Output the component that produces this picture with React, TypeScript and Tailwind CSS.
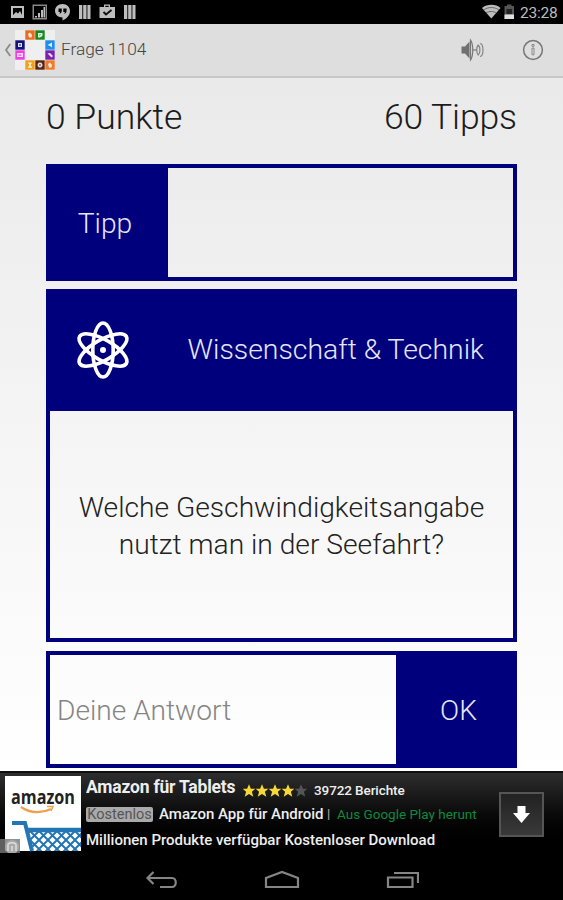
import type { ReactNode } from 'react';

const tiles = [
    { x: 10, y: 0, color: '#ec6a1b', glyph: 'flame' },
    { x: 20, y: 0, color: '#128a1c', glyph: 'leaf' },
    { x: 0, y: 10, color: '#14127a', glyph: 'atom' },
    { x: 30, y: 10, color: '#1f8df0', glyph: 'arrow' },
    { x: 0, y: 20, color: '#f03ce8', glyph: 'screen' },
    { x: 30, y: 20, color: '#7a1fae', glyph: 'tag' },
    { x: 10, y: 30, color: '#f0a21e', glyph: 'figure' },
    { x: 20, y: 30, color: '#5a2410', glyph: 'ball' },
    { x: 30, y: 30, color: '#f07a2a', glyph: 'flame' },
];

const glyphs: Record<string, ReactNode> = {
    flame: <path d="M3 4 L5 2.5 L7 5 L6.5 7.5 H4 Z" />,
    leaf: <path d="M3 3 H7.5 V6 L5 7.5 H3 Z M4.5 4.5 V6 L6 4.5 Z" fillRule="evenodd" />,
    atom: <path d="M3 3 H7 V7 H3 Z M4.3 4.3 V5.7 H5.7 V4.3 Z" fillRule="evenodd" />,
    arrow: <path d="M7 2.5 V7.5 L5 6 L2.5 5 Z" />,
    screen: <path d="M2 3 H8 V7 H2 Z M3.5 4.4 V5.8 H6.5 V4.4 Z" fillRule="evenodd" />,
    tag: <path d="M2.5 3.5 L5 3 L8 6 L6.5 7.5 Z" />,
    figure: <path d="M3 2.5 H7 L5.8 4.5 V6.5 H7 V7.8 H3 V6.5 H4.2 V4.5 Z" />,
    ball: <path d="M5 2.5 A2.5 2.5 0 1 0 5.01 2.5 Z M4.5 4 V6 H5.5 V4 Z" fillRule="evenodd" />,
};

export default function App() {
    return <div className="w-[563px] h-[900px] overflow-hidden flex flex-col bg-black font-['Roboto','Liberation_Sans',sans-serif]">
        <StatusBar />
        <ActionBar />
        <main className="h-[693px] shrink-0 px-[46px] bg-linear-to-b from-[#eaeaea] to-white flex flex-col">
            <div className="h-[86px] pt-[15px] flex justify-between font-light text-[35.5px] leading-[48px] text-[#1c1c1c]">
                <span>0 Punkte</span>
                <span className="-tracking-[0.1px]">60 Tipps</span>
            </div>
            <section className="h-[117px] shrink-0 flex border-4 border-[#00007c]">
                <button className="w-[118px] pr-2 pt-1 bg-[#00007c] text-[#e6e6fa] text-[28.2px] font-light">Tipp</button>
            </section>
            <section className="mt-2 h-[353px] shrink-0 flex flex-col border-4 border-[#00007c]">
                <div className="h-[118px] pb-1 shrink-0 bg-[#00007c] flex items-center justify-between pl-[25px] pr-[29px]">
                    <AtomIcon />
                    <h1 className="text-[28.4px] font-light text-[#e6e6fa] whitespace-nowrap">Wissenschaft &amp; Technik</h1>
                </div>
                <p className="grow pt-[3px] flex flex-col items-center justify-center text-[28.2px] leading-[37px] font-light text-[#222] whitespace-nowrap">
                    <span>Welche Geschwindigkeitsangabe</span>
                    <span>nutzt man in der Seefahrt?</span>
                </p>
            </section>
            <section className="mt-[9px] h-[117px] shrink-0 flex border-4 border-[#00007c]">
                <div className="grow pl-[7px] pt-[3px] flex items-center text-[28.1px] font-light text-[#858585]">Deine Antwort</div>
                <button className="w-[117px] pl-2 pt-[3px] bg-[#00007c] text-[#e6e6fa] text-[28.2px] font-light">OK</button>
            </section>
        </main>
        <AdBanner />
        <NavBar />
    </div>
}

function StatusBar() {
    return <header className="h-[24px] shrink-0 bg-black flex items-center justify-between pl-[11px] pr-[5px]">
        <svg width="126" height="24" viewBox="11 0 126 24" fill="#bdbdbd">
            <path d="M11 6H24V18H11Z M13 8V16H22V8Z" fillRule="evenodd" />
            <path d="M13 15L16 12L18 13.5L20 11L22 15V16H13Z" />
            <path d="M32.5 4.5H47V19.5H32.5Z M34 6V18H45.5V6Z" fillRule="evenodd" fill="#888" />
            <path d="M35 16H37V17.5H35Z M38 13H40V17.5H38Z M41 10H43V17.5H41Z M43.5 7H45V17.5H43.5Z" />
            <path d="M62.5 4C67 4 70 7.3 70 11C70 15.5 66.5 18.8 62.5 20.5V17.5C58.5 17.5 55 15 55 10.8C55 7 58 4 62.5 4Z M58.5 8.5V12H60L59.5 14C61.2 13.2 61.8 12 61.8 10.5V8.5Z M63.3 8.5V12H64.8L64.3 14C66 13.2 66.6 12 66.6 10.5V8.5Z" fillRule="evenodd" />
            <path d="M79 5H82.3V19H79Z M83.2 5H86.5V19H83.2Z M87.4 5H90.5V19H87.4Z" />
            <path d="M104 7V4.5H110V7H115V18H99.5V7Z M105.3 5.7V7H108.7V5.7Z" fillRule="evenodd" />
            <path d="M103.5 12L106 14.5L111.5 10" fill="none" stroke="#111" strokeWidth="2" />
            <path d="M124 5H127.3V19H124Z M128.2 5H131.5V19H128.2Z M132.4 5H135.5V19H132.4Z" />
        </svg>
        <div className="flex items-center">
            <svg width="38" height="24" viewBox="482 0 38 24" fill="#bdbdbd">
                <path d="M482 8C487 3.8 496 3.8 500.5 8L491.3 18.5Z" />
                <path d="M483.5 10C488 6.7 494.5 6.7 499 10M486 13C489 11 493.5 11 496.5 13" fill="none" stroke="#444" strokeWidth="0.7" />
                <path d="M507 4.5H511.5V6H514V19H504.5V6H507Z" fill="#555" />
                <path d="M506.5 9H512V14H506.5Z" fill="#222" />
                <path d="M504.5 14.5H514V19H504.5Z" fill="#e0e0e0" />
            </svg>
            <span className="text-[15.5px] leading-6 pt-0.5 text-[#bdbdbd] w-[38px] -tracking-[0.2px]">23:28</span>
        </div>
    </header>
}

function ActionBar() {
    return <div className="h-[54px] shrink-0 bg-[#dedede] border-b-2 border-[#c8c8c8] flex items-center pl-1 pr-[19px]">
        <svg width="11" height="20" viewBox="0 0 11 20" fill="none" stroke="#8b8b8b" strokeWidth="1.8">
            <path d="M6.3 4L2 10L6.3 16" />
        </svg>
        <svg width="40" height="40" viewBox="0 0 40 40">
            <rect width="40" height="40" fill="#efefef" />
            {tiles.map((tile, index) => <g key={index} transform={`translate(${tile.x} ${tile.y})`}>
                <rect x="0.3" y="0.3" width="9.4" height="9.4" fill={tile.color} />
                <g fill="#fff" opacity="0.85">{glyphs[tile.glyph]}</g>
            </g>)}
        </svg>
        <span className="ml-[6px] text-[17.3px] text-[#444] font-light grow">Frage 1104</span>
        <svg className="mr-[37px]" width="25" height="24" viewBox="0 0 25 24">
            <path d="M1.5 8.5H5L9.5 3.5V20.5L5 15.5H1.5Z" fill="#707070" />
            <path d="M10.5 2V22C13.5 18 13.5 6 10.5 2Z" fill="#dedede" stroke="#777" strokeWidth="1.2" />
            <path d="M13 12H17" stroke="#777" strokeWidth="1.2" />
            <path d="M18.2 7C16.3 9 16.3 15 18.2 17C20.5 15 20.5 9 18.2 7ZM20 5.5C24 6 24 18 20 18.5" fill="none" stroke="#858585" strokeWidth="1.2" />
        </svg>
        <svg width="22" height="22" viewBox="0 0 22 22" fill="none" stroke="#777">
            <circle cx="11" cy="11" r="9.4" strokeWidth="1.5" />
            <path d="M10 5.5H12V7.3H10Z M10 9H12V15.8H10Z" strokeWidth="0.8" />
        </svg>
    </div>
}

function AtomIcon() {
    return <svg width="56" height="60" viewBox="-28 -30 56 60" fill="none" stroke="#fff" strokeWidth="3.6">
        <ellipse rx="10.2" ry="27" />
        <ellipse rx="10.2" ry="27" transform="rotate(60)" />
        <ellipse rx="10.2" ry="27" transform="rotate(-60)" />
        <circle r="3" fill="#fff" stroke="none" />
    </svg>
}

function AdBanner() {
    return <aside className="h-[82px] shrink-0 bg-linear-to-b from-[#2e2e2e] to-black border-t-2 border-[#101010] flex">
        <CartLogo />
        <div className="ml-[5px] w-[391px] shrink-0 overflow-hidden whitespace-nowrap text-[#eee] font-medium">
            <div className="h-[28px] flex items-center">
                <strong className="w-[156px] shrink-0 text-[17.5px] leading-7 font-bold -tracking-[0.2px]">Amazon für Tablets</strong>
                <Stars />
                <span className="ml-[7px] pt-[7px] text-[13.5px] -tracking-[0.1px]">39722 Berichte</span>
            </div>
            <div className="h-[26px] flex items-center">
                <span className="w-[67px] h-[15px] shrink-0 rounded-[2px] bg-[#aaa] text-[#555] text-[14.5px] leading-[15px] text-center font-normal">Kostenlos</span>
                <span className="ml-[6px] w-[168px] shrink-0 text-[15px]">Amazon App für Android</span>
                <span className="w-[10px] shrink-0 text-[13px] text-[#aaa]">|</span>
                <span className="text-[13.5px] font-normal text-[#0c8a3e]">Aus Google Play herunt</span>
            </div>
            <div className="h-[26px] text-[15px] leading-[26px]">Millionen Produkte verfügbar Kostenloser Download</div>
        </div>
        <div className="mt-[19px] ml-[22px] w-[45px] h-[45px] shrink-0 flex items-center justify-center border-2 border-[#555] bg-linear-to-b from-[#222] to-[#393939]">
            <svg width="17" height="17" viewBox="0 0 17 17">
                <path d="M4.5 0H12.5V7H17L8.5 17L0 7H4.5Z" fill="#fff" />
            </svg>
        </div>
    </aside>
}

function Stars() {
    return <svg className="mt-[7px] ml-px shrink-0" width="64" height="14" viewBox="0 0 64 14">
        {[0, 1, 2, 3, 4].map(i => <path
            key={i}
            transform={`translate(${i * 13} 0)`}
            d="M6 0.3L7.9 4.7H12.3L8.9 7.8L10.3 12.8L6 10L1.7 12.8L3.1 7.8L-0.3 4.7H4.1Z"
            fill={i < 4 ? '#f8d838' : '#555'}
        />)}
    </svg>
}

function CartLogo() {
    return <svg className="mt-[3px] shrink-0" width="81" height="79" viewBox="0 0 81 79">
        <defs>
            <pattern id="mesh" width="9" height="9" patternUnits="userSpaceOnUse" x="30" y="55">
                <path d="M-1 -1L10 10M10 -1L-1 10" stroke="#2475b5" strokeWidth="2" />
            </pattern>
        </defs>
        <rect x="5" width="76" height="75" fill="#fff" />
        <text x="11" y="28" fontSize="19" fontFamily="Open Sans, sans-serif" fontWeight="700" fill="#222" textLength="64" lengthAdjust="spacingAndGlyphs">amazon</text>
        <path d="M21 31C31 38 43 37 51 33" fill="none" stroke="#efa04c" strokeWidth="2.2" />
        <path d="M47 30.5L53 30.5L51 35" fill="none" stroke="#efa04c" strokeWidth="1.5" />
        <path d="M28 54H81V75H33Z" fill="url(#mesh)" />
        <path d="M12 47H25L32 75" fill="none" stroke="#2475b5" strokeWidth="4" />
        <path d="M27 54H81" fill="none" stroke="#2475b5" strokeWidth="4.5" />
        <rect y="63" width="20" height="16" fill="#777" opacity="0.8" />
        <circle cx="12" cy="71" r="7" fill="#aaa" />
        <path d="M8 75V69C8 66 16 66 16 69V75M12 70V75" fill="none" stroke="#ddd" strokeWidth="1.5" />
    </svg>
}

function NavBar() {
    return <nav className="grow bg-black flex items-center justify-between pt-2 px-[144px]">
        <svg width="34" height="24" viewBox="0 0 34 24" fill="none" stroke="#858585" strokeWidth="2.2">
            <path d="M9.5 3L3.5 9L9.5 15M3.5 9H28C33 9 33 18 28 18H16" />
        </svg>
        <svg width="36" height="24" viewBox="0 0 36 24" fill="none" stroke="#858585" strokeWidth="2.2">
            <path d="M2 18V9L18 3L34 9V18Z" />
        </svg>
        <svg width="34" height="24" viewBox="0 0 34 24" fill="none" stroke="#858585" strokeWidth="2.2">
            <path d="M3 8.5H27.5V18H3Z M9 4H33V14" />
        </svg>
    </nav>
}
